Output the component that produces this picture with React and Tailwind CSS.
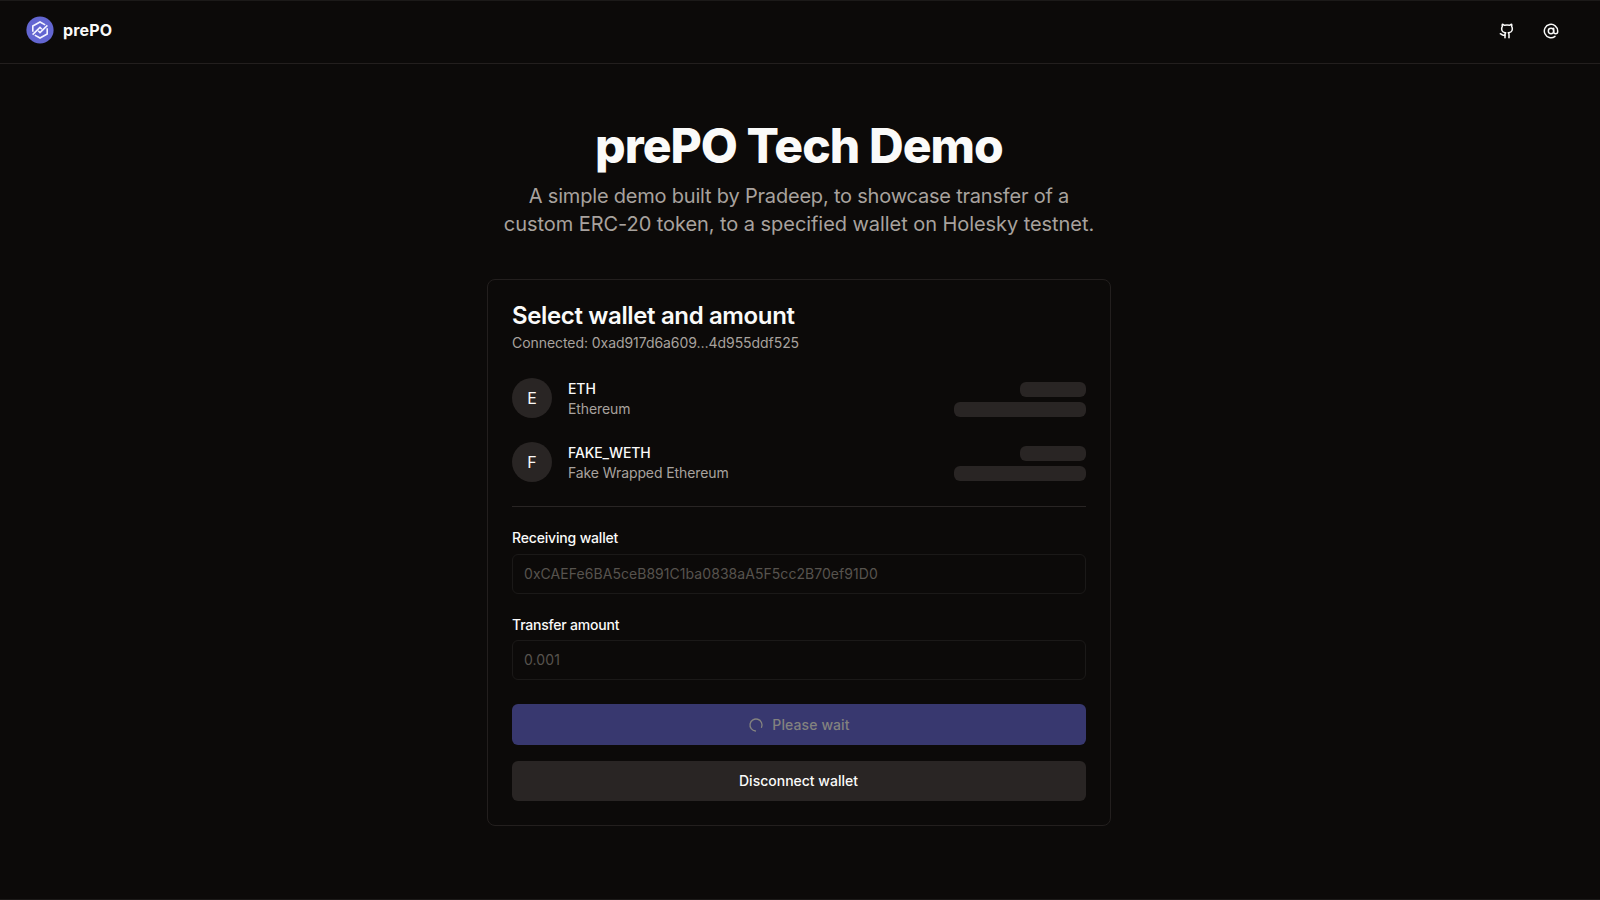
import { AtSign, Github, LoaderCircle } from "lucide-react";

const tokens = [
  { symbol: "ETH", name: "Ethereum" },
  { symbol: "FAKE_WETH", name: "Fake Wrapped Ethereum" },
];

function Logo() {
  return (
    <svg width="28" height="28" viewBox="0 0 28 28" fill="none">
      <circle cx="14" cy="14" r="13.6" fill="#6366d1" />
      <g stroke="#f4f4ff" strokeWidth="1.6">
        <path d="M6.8 15.8V10L14 6L19.2 8.9" />
        <path d="M21.2 12.2V18L14 22L8.8 19.1" />
        <path d="M6.6 18.6L14 11.4L15.8 13.2" />
        <path d="M21.4 9.4L14 16.6L12.2 14.8" />
      </g>
    </svg>
  );
}

function TokenRow({ token }) {
  return (
    <div className="flex h-10 items-center">
      <div className="flex size-10 items-center justify-center rounded-full bg-[#292524] text-base">
        {token.symbol[0]}
      </div>
      <div className="ml-4 flex flex-col pt-[2px] text-sm leading-5 tracking-[-0.1px]">
        <span className="font-medium">{token.symbol}</span>
        <span className="text-[#a8a29e]">{token.name}</span>
      </div>
      <div className="ml-auto flex flex-col items-end gap-[5px] pt-[3px]">
        <div className="h-[15px] w-[66px] rounded-md bg-[#292524]" />
        <div className="h-[15px] w-[132px] rounded-md bg-[#292524]" />
      </div>
    </div>
  );
}

export default function App() {
  return (
    <div className="flex h-[900px] w-[1600px] flex-col border-y border-[#1c1a19] bg-[#0c0a09] font-[Inter,sans-serif] text-[#fafaf9]">
      <header className="flex h-[63px] shrink-0 items-center justify-between border-b border-[#231f1e] pr-[41px] pl-[26px]">
        <div className="flex items-center gap-[9px] pb-[5px]">
          <Logo />
          <span className="text-base font-bold tracking-[0.15px]">prePO</span>
        </div>
        <div className="flex gap-7 pb-[2px]">
          <Github size={16} strokeWidth={2.3} />
          <AtSign size={16} strokeWidth={2.2} />
        </div>
      </header>
      <main className="flex w-[1598px] flex-col items-center">
        <h1 className="mt-[58px] text-[48px] leading-[48px] font-extrabold tracking-[-0.95px]">prePO Tech Demo</h1>
        <p className="mt-3 text-center text-xl leading-7 text-[#a8a29e]">
          <span className="tracking-[-0.2px]">A simple demo built by Pradeep, to showcase transfer of a</span>
          <br />
          <span className="tracking-[-0.06px]">custom ERC-20 token, to a specified wallet on Holesky testnet.</span>
        </p>
        <section className="mt-[41px] flex h-[547px] w-[624px] flex-col rounded-lg border border-[#231f1e] px-6 pt-6">
          <h2 className="text-2xl leading-6 font-semibold tracking-[-0.36px]">Select wallet and amount</h2>
          <p className="mt-[5px] text-sm leading-5 tracking-[-0.06px] text-[#a8a29e]">
            Connected: 0xad917d6a609…4d955ddf525
          </p>
          <div className="mt-[25px] flex flex-col gap-6">
            {tokens.map((token) => (
              <TokenRow key={token.symbol} token={token} />
            ))}
          </div>
          <div className="mt-6 h-px shrink-0 bg-[#292524]" />
          <label className="mt-[23px] text-sm leading-4 font-medium tracking-[-0.17px]">Receiving wallet</label>
          <div className="mt-2 flex h-10 items-center rounded-md border border-[#1b1918] px-[11px] text-sm tracking-[0.05px] text-[#57534e]">
            0xCAEFe6BA5ceB891C1ba0838aA5F5cc2B70ef91D0
          </div>
          <label className="mt-[23px] text-sm leading-4 font-medium tracking-[-0.2px]">Transfer amount</label>
          <div className="mt-[7px] flex h-10 items-center rounded-md border border-[#1b1918] px-[11px] text-sm tracking-[0.1px] text-[#57534e]">
            0.001
          </div>
          <button className="mt-6 flex h-[41px] items-center justify-center rounded-md bg-[#38386f] text-sm font-medium tracking-[0.1px] text-[#83827f]">
            <LoaderCircle size={16} className="mr-2 rotate-95" />
            <span>Please wait</span>
          </button>
          <button className="mt-4 flex h-10 items-center justify-center rounded-md bg-[#292524] pr-px text-sm font-medium">
            Disconnect wallet
          </button>
        </section>
      </main>
    </div>
  );
}
